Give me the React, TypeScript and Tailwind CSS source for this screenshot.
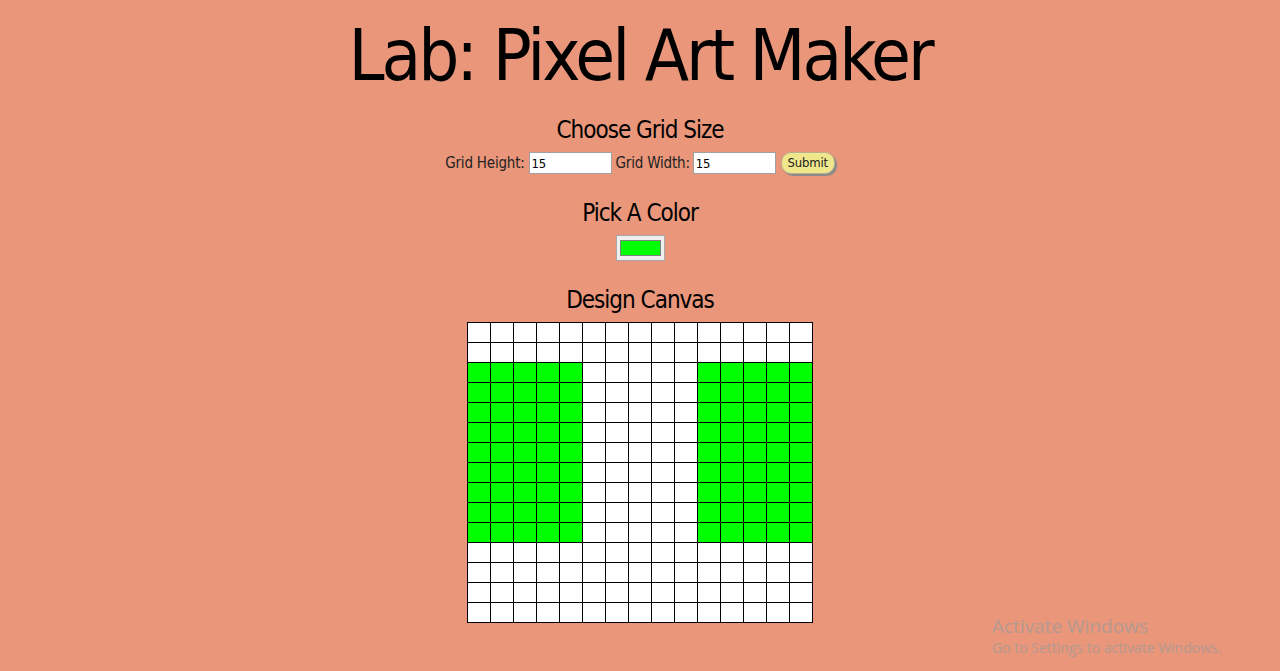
import React, { useState } from "react";

const ROWS = 15;
const COLS = 15;

function isGreen(r: number, c: number) {
    return r >= 2 && r <= 10 && (c <= 4 || c >= 10);
}

const titleFont = {
    fontFamily:
        '"DejaVu Sans Condensed", "Liberation Sans Narrow", "Roboto Condensed", sans-serif',
};

export default function App() {
    const [height] = useState("15");
    const [width] = useState("15");

    return (
        <div
            className="relative min-h-[671px] w-full bg-[#e9967a] text-black"
            style={titleFont}
        >
            <div className="flex flex-col items-center">
                <h1 className="flex h-[110px] items-center text-[72px] font-normal leading-none tracking-[-3px]">
                    Lab: Pixel Art Maker
                </h1>

                <h2 className="mt-[5px] flex h-[30px] items-center text-[24px] leading-none tracking-[-1px]">
                    Choose Grid Size
                </h2>

                <form
                    className="mt-[6px] flex h-[24px] items-center text-[15px] tracking-[-0.2px] text-[#222]"
                    onSubmit={(e) => e.preventDefault()}
                >
                    <label>Grid Height:</label>
                    <input
                        type="number"
                        value={height}
                        readOnly
                        className="ml-[4px] h-[22px] w-[83px] border border-[#a0a0a0] bg-white px-[2px] text-[13px] text-black outline-none"
                    />
                    <label className="ml-[4px]">Grid Width:</label>
                    <input
                        type="number"
                        value={width}
                        readOnly
                        className="ml-[3px] h-[22px] w-[83px] border border-[#a0a0a0] bg-white px-[2px] text-[13px] text-black outline-none"
                    />
                    <button
                        type="submit"
                        className="ml-[5px] h-[22px] w-[54px] rounded-[10px] border border-[#b8b090] bg-[#f0e68c] text-[13px] text-[#222] shadow-[2px_2px_1px_#8a8a8a]"
                    >
                        Submit
                    </button>
                </form>

                <h2 className="mt-[23px] flex h-[30px] items-center text-[24px] leading-none tracking-[-1px]">
                    Pick A Color
                </h2>

                <div className="mt-[7px] flex h-[26px] w-[49px] items-center justify-center border border-[#a8a8a8] bg-[#efefef]">
                    <div className="h-[16px] w-[41px] border border-[#808080] bg-[#00ff00]" />
                </div>

                <h2 className="mt-[24px] flex h-[30px] items-center text-[24px] leading-none tracking-[-1px]">
                    Design Canvas
                </h2>

                <div className="mt-[7px] border-t border-l border-black bg-white">
                    {Array.from({ length: ROWS }).map((_, r) => (
                        <div key={r} className="flex">
                            {Array.from({ length: COLS }).map((_, c) => (
                                <div
                                    key={c}
                                    className={
                                        "h-[20px] w-[23px] border-r border-b border-black " +
                                        (isGreen(r, c) ? "bg-[#00ff00]" : "bg-white")
                                    }
                                />
                            ))}
                        </div>
                    ))}
                </div>
            </div>

            <div
                className="absolute left-[992px] top-[614px] text-[#b49a90]"
                style={{ fontFamily: '"Open Sans", sans-serif' }}
            >
                <div className="text-[19px] leading-[24px]">Activate Windows</div>
                <div className="text-[14px] leading-[20px]">
                    Go to Settings to activate Windows.
                </div>
            </div>
        </div>
    );
}
